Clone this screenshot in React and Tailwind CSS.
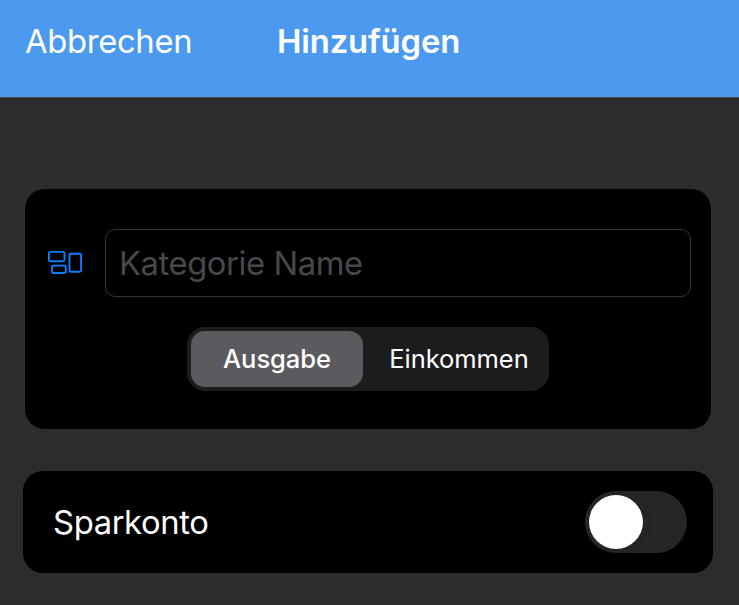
function CategoryIcon() {
  return (
    <svg className="mb-0.5 block h-6 w-9 text-[#0a7fff]" viewBox="0 0 36 24" fill="none" stroke="currentColor" strokeWidth="1.9">
      <rect x="0.9" y="1.9" width="15.6" height="9.4" rx="1.5" />
      <rect x="3.9" y="15.6" width="13.9" height="7.4" rx="1.5" />
      <rect x="21.5" y="3.8" width="11.6" height="18" rx="1.5" />
    </svg>
  );
}

export default function App() {
  return (
    <div className="h-[605px] w-[739px] overflow-hidden bg-[#2c2c2e] font-['Inter','Liberation_Sans',sans-serif] text-[32.75px] leading-10 text-white">
      <header className="flex h-[98px] items-start border-b border-[#48494b] bg-[#4c9aef] pt-[21px] whitespace-nowrap">
        <button className="ml-[25px] w-[251px] text-left tracking-[-0.32px]">Abbrechen</button>
        <h1 className="pl-px font-semibold tracking-[-0.12px]">Hinzufügen</h1>
      </header>

      <section className="mt-[91px] ml-[25px] flex h-60 w-[686px] flex-col items-center rounded-[20px] bg-black pt-10">
        <div className="flex w-full items-center pr-5 pl-[23px]">
          <CategoryIcon />
          <div className="ml-[21px] flex h-[68px] flex-1 items-center rounded-[10px] border border-[#343436] pl-[13px] tracking-[-0.42px] whitespace-nowrap text-[#48484a]">
            Kategorie Name
          </div>
        </div>
        <div className="mt-[30px] flex h-16 w-[362px] rounded-[18px] bg-[#1c1c1e] p-1 text-[25.5px] tracking-[-0.05px] whitespace-nowrap">
          <button className="flex h-14 w-[172px] items-center justify-center rounded-[14px] bg-[#5b5a5f] font-medium">Ausgabe</button>
          <button className="ml-[10px] flex h-14 w-[172px] items-center justify-center">Einkommen</button>
        </div>
      </section>

      <section className="mt-[42px] ml-[23px] flex h-[102px] w-[690px] items-center justify-between rounded-[20px] bg-black pr-[26px] pl-[30px]">
        <span className="tracking-[-0.38px]">Sparkonto</span>
        <button className="flex h-[62px] w-[102px] items-center rounded-full bg-[#262628] pl-1" role="switch" aria-checked="false">
          <span className="size-[54px] rounded-full bg-white shadow-[2px_3px_8px_rgba(0,0,0,0.1)]" />
        </button>
      </section>
    </div>
  );
}
